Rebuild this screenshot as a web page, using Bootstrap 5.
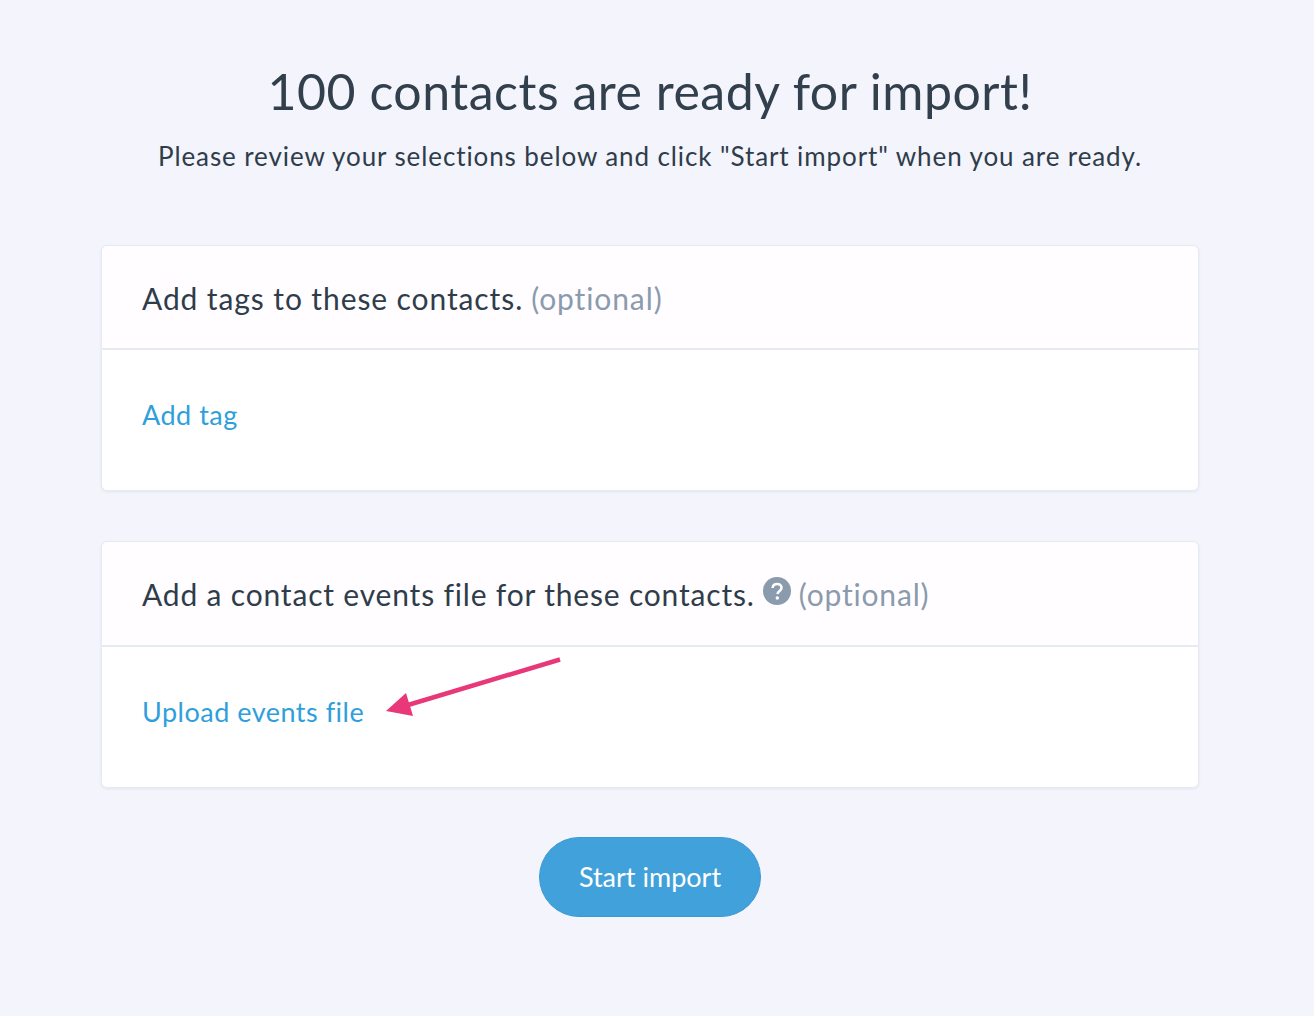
<!DOCTYPE html>
<html lang="en"><head><meta charset="utf-8"><title>Import</title>
<link rel="stylesheet" href="https://cdn.jsdelivr.net/npm/bootstrap@5.3.0/dist/css/bootstrap.min.css">
<style>
body{background:#f3f4fc;font-family:"Lato","Open Sans",sans-serif;color:#2f3c4a;min-height:1016px;font-variant-ligatures:none}
.shell{width:1098px;margin-left:101px}
.hero-title{font-size:50px;font-weight:400;line-height:60px;margin:0;padding-top:61px;color:#323f4c;letter-spacing:.52px}
.hero-sub{font-size:26px;line-height:36px;margin:0;padding-top:17px;color:#2f3c4a;letter-spacing:.9px}
.panel{border:1px solid #e6ebf1;border-radius:6px;background:#fff;box-shadow:0 1px 3px rgba(50,60,80,.08);position:relative}
.panel-one{margin-top:71px;height:246px}
.panel-two{margin-top:50px;height:247px}
.panel-head{background:#fffdff;border-bottom:2px solid #e6ebf1;border-radius:6px 6px 0 0;height:104px;padding:2px 40px 0;font-size:30px;letter-spacing:.9px;display:flex;align-items:center}
.panel-two .panel-head{height:105px;letter-spacing:.82px}
.panel-body-text{padding:49px 40px 0;font-size:27px;line-height:32px;color:#2f9fdc;letter-spacing:.5px}
.muted-note{color:#8a9bad;margin-left:8px}
.help-dot{margin-left:8px;margin-top:-8px;flex:none}
.pointer-arrow{position:absolute;left:280px;top:111px;overflow:visible}
.go-wrap{padding-top:49px}
.go-btn{background:#41a1db;color:#fff;border-radius:40px;width:222px;height:80px;font-size:27px;border:1px solid #3c9ad3}
</style></head><body>
<div class="shell">
<div class="text-center"><h1 class="hero-title">100 contacts are ready for import!</h1>
<p class="hero-sub">Please review your selections below and click "Start import" when you are ready.</p></div>
<div class="panel panel-one"><div class="panel-head">Add tags to these contacts.<span class="muted-note">(optional)</span></div><div class="panel-body-text">Add tag</div></div>
<div class="panel panel-two"><div class="panel-head">Add a contact events file for these contacts.
<svg class="help-dot" width="28" height="28" viewBox="0 0 28 28" aria-hidden="true"><circle cx="14" cy="14" r="14" fill="#8a9bad"/><path d="M9.6 11c.2-2.6 2-4 4.5-4s4.400 1.500 4.400 3.700c0 1.700-.9 2.600-2.200 3.500-1.300.9-1.700 1.500-1.700 2.800" fill="none" stroke="#fff" stroke-width="2.600"/><circle cx="14.300" cy="21" r="1.700" fill="#fff"/></svg>
<span class="muted-note">(optional)</span></div><div class="panel-body-text">Upload events file</div>
<svg class="pointer-arrow" width="180" height="65" viewBox="0 0 180 65" aria-hidden="true"><path d="M178 6.500 L26 52" stroke="#e8387a" stroke-width="4.500" fill="none"/><path d="M4 58 L24 40 L31 63 Z" fill="#e8387a"/></svg>
</div>
<div class="text-center go-wrap"><button class="go-btn">Start import</button></div>
</div>
</body></html>
